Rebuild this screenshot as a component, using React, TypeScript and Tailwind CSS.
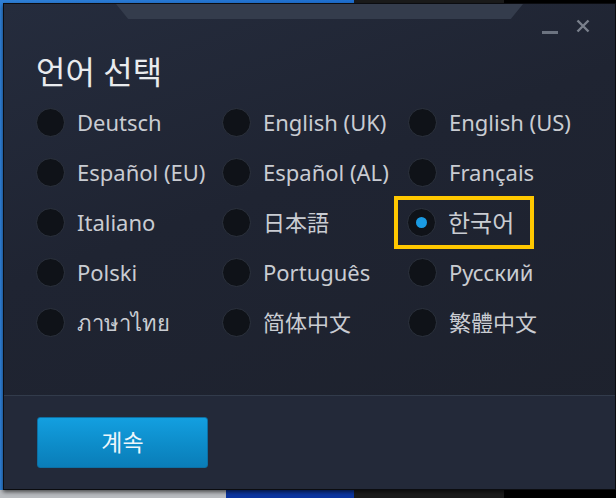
import React from "react";

const langs = [
  "Deutsch", "English (UK)", "English (US)",
  "Español (EU)", "Español (AL)", "Français",
  "Italiano", "日本語", "한국어",
  "Polski", "Português", "Русский",
  "ภาษาไทย", "简体中文", "繁體中文",
];

function Radio({ checked }: { checked?: boolean }) {
  return (
    <span className="flex h-[29px] w-[29px] shrink-0 items-center justify-center rounded-full border border-[#2c323e] bg-[#0f1218]">
      {checked && <span className="h-[11px] w-[11px] rounded-full bg-[#1a9be3]" />}
    </span>
  );
}

export default function App() {
  return (
    <div
      className="flex h-[498px] w-[616px] flex-col overflow-hidden bg-[linear-gradient(90deg,#2f80d8_0px,#1e6fd0_354px,#1b1b1b_354px,#1b1b1b_504px,#000_504px)] pl-[3px] pt-[3px]"
      style={{ fontFamily: '"Noto Sans", "Open Sans", "Noto Sans CJK KR", sans-serif' }}
    >
      <div className="relative flex h-[487px] w-[613px] shrink-0 flex-col border border-[#0b0c10] bg-[linear-gradient(160deg,#252c3d_0%,#1f2432_40%,#1d212c_100%)] shadow-[0_2px_4px_rgba(0,0,0,0.6)]">
        {/* top tab */}
        <div className="absolute left-[112px] top-0 h-[15px] w-[407px] bg-[#343c4c] [clip-path:polygon(0_0,100%_0,97%_100%,3%_100%)]" />
        {/* window controls */}
        <div className="absolute right-[25px] top-[15px] flex items-start gap-[18px]">
          <span className="mt-[12px] h-[3px] w-[16px] bg-[#6c7380]" />
          <svg width="14" height="14" viewBox="0 0 14 14">
            <path d="M1.5 1.5 L12.5 12.5 M12.5 1.5 L1.5 12.5" stroke="#7a808c" strokeWidth="2.4" />
          </svg>
        </div>

        <div className="flex-1 pl-[32px] pt-[49px]">
          <h1 className="text-[32px] leading-[38px] text-[#e9ebee]">언어 선택</h1>
          <div className="mt-[17px] grid grid-cols-[186px_186px_186px] gap-y-[21px]">
            {langs.map((l) => {
              const sel = l === "한국어";
              return (
                <div key={l} className="flex h-[29px] items-center gap-[12px]">
                  {sel ? (
                    <div className="-ml-[14px] -my-[14px] flex items-center gap-[12px] border-[4px] border-[#ffc800] py-[8px] pl-[9px] pr-[16px]">
                      <Radio checked />
                      <span className="text-[24px] leading-[29px] text-[#c9ccd2]">{l}</span>
                    </div>
                  ) : (
                    <>
                      <Radio />
                      <span className="whitespace-nowrap text-[22px] leading-[29px] text-[#c9ccd2]">{l}</span>
                    </>
                  )}
                </div>
              );
            })}
          </div>
        </div>

        <div className="h-[94px] border-t border-[#323b4b] bg-[#232939] pl-[33px] pt-[21px]">
          <button className="flex h-[51px] w-[171px] items-center justify-center rounded-[3px] border border-[#0d6fa3] bg-[linear-gradient(180deg,#139fe0_0%,#0d8cc9_55%,#0a7db8_100%)] text-[23px] text-[#eef6fb]">
            계속
          </button>
        </div>
      </div>
      <div className="flex h-[8px] w-[613px] shrink-0 -ml-[3px]">
        <div className="w-[226px] bg-[#b9bcc0]" />
        <div className="w-[128px] bg-[#0b35a0]" />
        <div className="w-[150px] bg-[#1b1b1b]" />
        <div className="flex-1 bg-black" />
      </div>
    </div>
  );
}
